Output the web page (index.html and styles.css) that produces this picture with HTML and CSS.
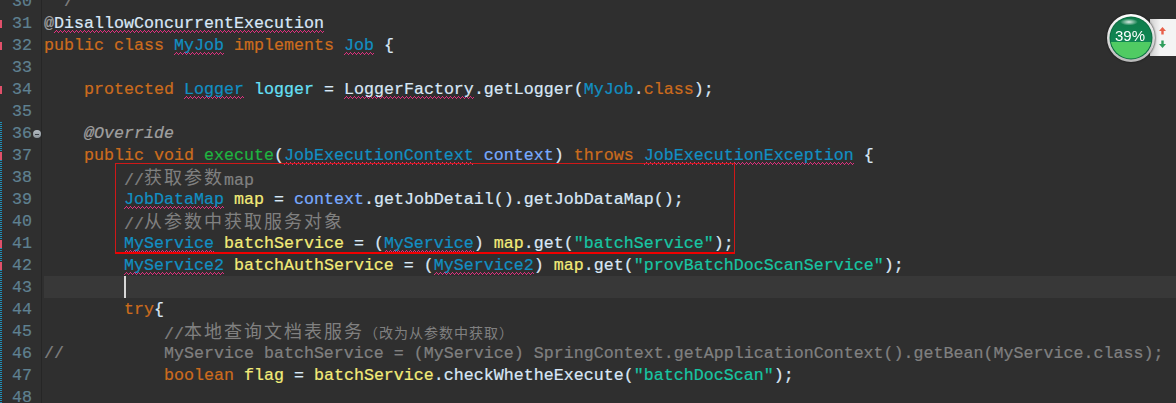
FILE: index.html
```html
<!DOCTYPE html>
<html lang="zh">
<head>
<meta charset="utf-8">
<title>MyJob.java</title>
<link rel="stylesheet" href="styles.css">
</head>
<body>
<div class="editor">
  <div class="gutter">
    <div class="num">30</div>
    <div class="num err">31</div>
    <div class="num err">32</div>
    <div class="num">33</div>
    <div class="num err">34</div>
    <div class="num">35</div>
    <div class="num range">36<span class="fold"></span></div>
    <div class="num err range">37</div>
    <div class="num range">38</div>
    <div class="num range">39</div>
    <div class="num range">40</div>
    <div class="num err range">41</div>
    <div class="num err range">42</div>
    <div class="num range">43</div>
    <div class="num range">44</div>
    <div class="num range">45</div>
    <div class="num range">46</div>
    <div class="num range">47</div>
    <div class="num range">48</div>
  </div>
  <div class="code">
    <div class="line"> <span class="c">*/</span></div>
    <div class="line"><span class="a">@</span><span class="w">DisallowConcurrentExecution</span></div>
    <div class="line"><span class="k">public class </span><span class="t w">MyJob</span><span class="k"> implements </span><span class="t w">Job</span> {</div>
    <div class="line"></div>
    <div class="line">    <span class="k">protected </span><span class="t w">Logger</span> <span class="f">logger</span> = <span class="w">LoggerFactory</span>.getLogger(<span class="t">MyJob</span>.<span class="k">class</span>);</div>
    <div class="line"></div>
    <div class="line">    <span class="a i">@Override</span></div>
    <div class="line">    <span class="k">public void </span><span class="m">execute</span>(<span class="t w">JobExecutionContext</span> <span class="p">context</span>) <span class="k">throws </span><span class="t w">JobExecutionException</span> {</div>
    <div class="line">        <span class="c">//<span class="z">获取参数</span>map</span></div>
    <div class="line">        <span class="t w">JobDataMap</span> <span class="v">map</span> = <span class="p">context</span>.getJobDetail().getJobDataMap();</div>
    <div class="line">        <span class="c">//<span class="z">从参数中获取服务对象</span></span></div>
    <div class="line">        <span class="t w">MyService</span> <span class="v">batchService</span> = (<span class="t w">MyService</span>) <span class="v">map</span>.get(<span class="s">"batchService"</span>);</div>
    <div class="line">        <span class="t w">MyService2</span> <span class="v">batchAuthService</span> = (<span class="t w">MyService2</span>) <span class="v">map</span>.get(<span class="s">"provBatchDocScanService"</span>);</div>
    <div class="line current"><span class="indent">        </span><span class="caret"></span></div>
    <div class="line">        <span class="k">try</span>{</div>
    <div class="line">            <span class="c">//<span class="z">本地查询文档表服务</span><span class="zs">（改为从参数中获取）</span></span></div>
    <div class="line"><span class="c">//          MyService batchService = (MyService) SpringContext.getApplicationContext().getBean(MyService.class);</span></div>
    <div class="line">            <span class="k">boolean </span><span class="v">flag</span> = <span class="v">batchService</span>.checkWhetheExecute(<span class="s">"batchDocScan"</span>);</div>
    <div class="line"></div>
    <div class="mark"></div>
  </div>
</div>
<div class="widget">
  <div class="panel">
    <svg class="arrows" width="7" height="21" viewBox="0 0 7 21" aria-hidden="true">
      <path d="M3.5 0 L7 4 H4.7 V7.5 H2.3 V4 H0 Z" fill="#e8604a"/>
      <path d="M3.5 21 L7 17 H4.7 V13.5 H2.3 V17 H0 Z" fill="#2f9e5c"/>
    </svg>
  </div>
  <svg class="ball" width="50" height="50" viewBox="0 0 50 50">
    <defs>
      <clipPath id="inner"><circle cx="25" cy="25" r="20.5"/></clipPath>
      <linearGradient id="top" x1="0" y1="0" x2="0" y2="1">
        <stop offset="0" stop-color="#0f7a4a"/>
        <stop offset="1" stop-color="#108652"/>
      </linearGradient>
      <radialGradient id="shine" cx="0.5" cy="0.5" r="0.5">
        <stop offset="0" stop-color="#ffffff" stop-opacity="0.85"/>
        <stop offset="1" stop-color="#ffffff" stop-opacity="0"/>
      </radialGradient>
      <linearGradient id="ring" x1="0" y1="0" x2="0" y2="1">
        <stop offset="0" stop-color="#ffffff"/>
        <stop offset="1" stop-color="#b8b8b8"/>
      </linearGradient>
    </defs>
    <circle cx="25" cy="25" r="24" fill="url(#ring)"/>
    <circle cx="25" cy="25" r="21.5" fill="#0c6e42"/>
    <g clip-path="url(#inner)">
      <rect x="0" y="0" width="50" height="29" fill="url(#top)"/>
      <rect x="0" y="29" width="50" height="21" fill="#50cb63"/>
      <ellipse cx="23" cy="9" rx="9" ry="3.5" fill="url(#shine)"/>
    </g>
    <text class="pct" x="24" y="28" text-anchor="middle">39%</text>
  </svg>
</div>
</body>
</html>
```
FILE: styles.css
```css
html, body {
  margin: 0;
  padding: 0;
  height: 100%;
  overflow: hidden;
  background: #2f2f2f;
}
.editor {
  display: flex;
  margin-top: -10px;
  font-family: "Liberation Mono", "Noto Sans CJK SC", monospace;
  font-size: 16.667px;
  line-height: 22px;
  color: #d9e8f7;
  -webkit-text-stroke: 0.2px;
}
.gutter {
  flex: none;
  width: 41px;
  background: #2f2f2f;
  border-right: 1px solid #262626;
  color: #5f8191;
}
.num {
  display: flex;
  align-items: center;
  height: 22px;
  padding-top: 2px;
  box-sizing: border-box;
}
.num::before {
  content: "";
  flex: none;
  width: 2px;
  height: 8px;
  margin-right: 10px;
}
.num.err::before {
  background: #e0506a;
}
.range {
  background-image: repeating-linear-gradient(to bottom, #1f8fb8 0 1px, #2f2f2f 1px 2px);
  background-size: 2px 100%;
  background-repeat: no-repeat;
}
.fold {
  flex: none;
  width: 8px;
  height: 8px;
  margin-left: 1px;
  border-radius: 50%;
  background: linear-gradient(#b5bcc2, #8c949a);
  position: relative;
}
.fold::after {
  content: "";
  position: absolute;
  left: 2px;
  right: 2px;
  top: 3.5px;
  height: 1px;
  background: #3a3f44;
}
.code {
  position: relative;
  flex: 1;
  margin-left: 2px;
  min-width: 0;
}
.line {
  height: 22px;
  padding-top: 1px;
  box-sizing: border-box;
  white-space: pre;
}
.current {
  background: #383838;
}
.indent {
  display: inline;
}
.caret {
  display: inline-block;
  width: 2px;
  height: 22px;
  margin-top: -1px;
  vertical-align: top;
  background: #d6d6d6;
}
.k { color: #cc6c1d; }
.t { color: #1290c3; }
.f { color: #66e1f8; }
.v { color: #f3ec79; }
.p { color: #79abff; }
.m { color: #1eb540; }
.s { color: #17c6a3; }
.c { color: #808080; }
.a { color: #a0a0a0; }
.i { font-style: italic; }
.w {
  background-image:
    linear-gradient(90deg, #e0307e 25%, transparent 25%),
    linear-gradient(90deg, #e0307e 50%, transparent 50%),
    linear-gradient(90deg, #e0307e 25%, transparent 25%);
  background-size: 4px 1px, 2px 1px, 4px 1px;
  background-repeat: repeat-x;
  background-position: 2px calc(100% - 2px), 1px calc(100% - 1px), 0 100%;
}
.z {
  font-family: "Noto Sans CJK SC", sans-serif;
  font-size: 18px;
  letter-spacing: 2px;
  line-height: 1;
  vertical-align: 1px;
  -webkit-text-stroke: 0;
}
.zs {
  font-family: "Noto Sans CJK SC", sans-serif;
  font-size: 14px;
  letter-spacing: 1px;
  line-height: 1;
  vertical-align: 1px;
  -webkit-text-stroke: 0;
}
.mark {
  position: absolute;
  left: 71px;
  top: 173px;
  width: 620px;
  height: 91px;
  box-sizing: border-box;
  border: 1px solid #d01818;
  border-bottom: 2px solid #f00000;
  pointer-events: none;
}
.widget {
  position: absolute;
  left: 1106px;
  top: 13px;
  width: 70px;
  height: 50px;
}
.ball {
  position: absolute;
  left: 0;
  top: 0;
  filter: drop-shadow(0 0 1px #111);
}
.panel {
  position: absolute;
  left: 44px;
  top: 6px;
  width: 26px;
  height: 37px;
  background: linear-gradient(90deg, #cfcfcf, #f4f4f4 40%);
  display: flex;
  align-items: center;
  padding-left: 9px;
  box-sizing: border-box;
}
.arrows {
  display: block;
}
.pct {
  font-family: "Liberation Sans", sans-serif;
  font-size: 15px;
  fill: #ffffff;
  stroke: none;
}
```
